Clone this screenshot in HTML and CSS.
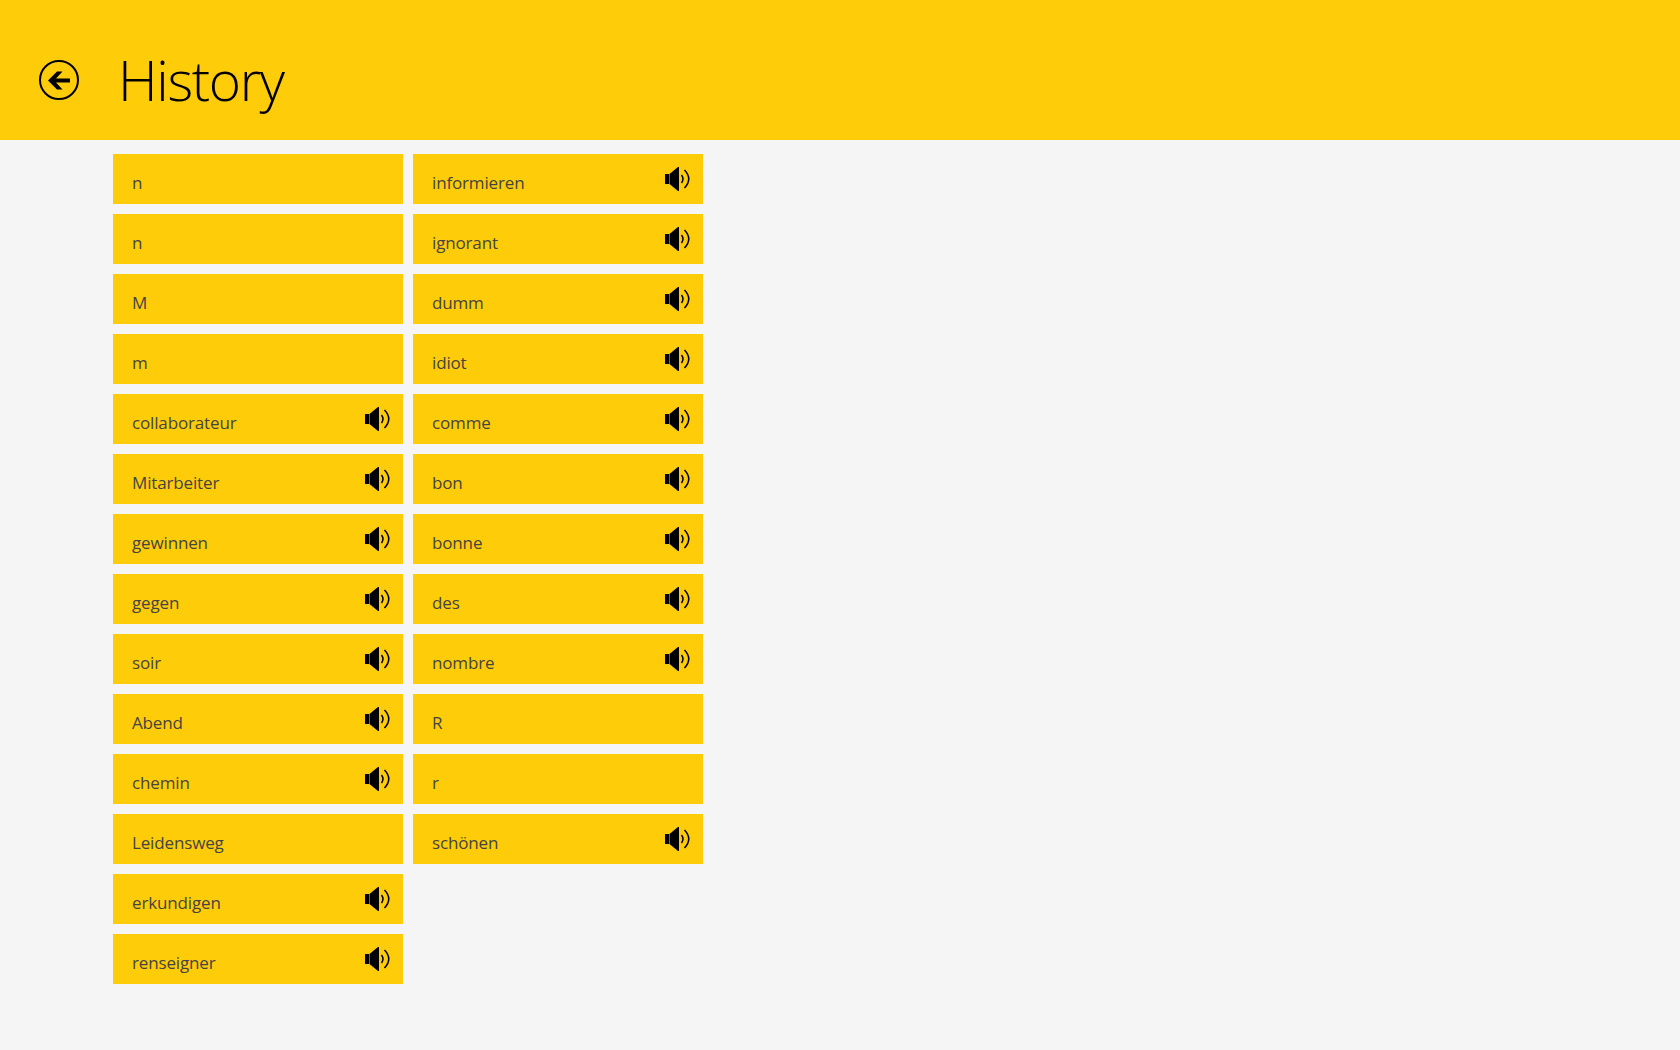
FILE: index.html
```html
<!DOCTYPE html>
<html>
<head>
    <title>History</title>
    <link rel="stylesheet" href="styles.css">
</head>
<body>
    <svg class="sprites" width="0" height="0">
        <symbol id="speaker" viewBox="0 0 25 24">
            <path d="M0 7h4v10H0z"/>
            <path d="M4.5 7 L13 0 h1 v24 h-1 L4.5 17z"/>
            <path class="wave" d="M16.5 8 Q19.5 12 16.5 16"/>
            <path class="wave" d="M19.5 3 Q28 12 19.5 21"/>
        </symbol>
    </svg>

    <div class="header">
        <a class="back-btn" href="#">
            <svg width="40" height="40" viewBox="0 0 40 40">
                <circle class="back-ring" cx="20" cy="20" r="19"/>
                <path d="M9 20.5 L18 11.5 h5.5 L17 18.5 H31 v4 H17 L23.5 29.5 H18z"/>
            </svg>
        </a>
        <h1>History</h1>
    </div>

    <div class="history-list">
        <div class="tile"><span>n</span></div>
        <div class="tile"><span>n</span></div>
        <div class="tile"><span>M</span></div>
        <div class="tile"><span>m</span></div>
        <div class="tile"><span>collaborateur</span><svg class="speaker"><use href="#speaker"/></svg></div>
        <div class="tile"><span>Mitarbeiter</span><svg class="speaker"><use href="#speaker"/></svg></div>
        <div class="tile"><span>gewinnen</span><svg class="speaker"><use href="#speaker"/></svg></div>
        <div class="tile"><span>gegen</span><svg class="speaker"><use href="#speaker"/></svg></div>
        <div class="tile"><span>soir</span><svg class="speaker"><use href="#speaker"/></svg></div>
        <div class="tile"><span>Abend</span><svg class="speaker"><use href="#speaker"/></svg></div>
        <div class="tile"><span>chemin</span><svg class="speaker"><use href="#speaker"/></svg></div>
        <div class="tile"><span>Leidensweg</span></div>
        <div class="tile"><span>erkundigen</span><svg class="speaker"><use href="#speaker"/></svg></div>
        <div class="tile"><span>renseigner</span><svg class="speaker"><use href="#speaker"/></svg></div>

        <div class="tile"><span>informieren</span><svg class="speaker"><use href="#speaker"/></svg></div>
        <div class="tile"><span>ignorant</span><svg class="speaker"><use href="#speaker"/></svg></div>
        <div class="tile"><span>dumm</span><svg class="speaker"><use href="#speaker"/></svg></div>
        <div class="tile"><span>idiot</span><svg class="speaker"><use href="#speaker"/></svg></div>
        <div class="tile"><span>comme</span><svg class="speaker"><use href="#speaker"/></svg></div>
        <div class="tile"><span>bon</span><svg class="speaker"><use href="#speaker"/></svg></div>
        <div class="tile"><span>bonne</span><svg class="speaker"><use href="#speaker"/></svg></div>
        <div class="tile"><span>des</span><svg class="speaker"><use href="#speaker"/></svg></div>
        <div class="tile"><span>nombre</span><svg class="speaker"><use href="#speaker"/></svg></div>
        <div class="tile"><span>R</span></div>
        <div class="tile"><span>r</span></div>
        <div class="tile"><span>schönen</span><svg class="speaker"><use href="#speaker"/></svg></div>
    </div>
</body>
</html>
```

FILE: styles.css
```css
body {
    font-family: 'Open Sans', 'Noto Sans', sans-serif;
    margin: 0;
    padding: 0;
    height: 1050px;
    overflow: hidden;
    background-color: #f5f5f5;
}

.sprites {
    display: block;
}

.header {
    background-color: #ffcc09;
    height: 140px;
    display: flex;
    align-items: center;
    padding: 20px 0 0 39px;
    box-sizing: border-box;
}

.back-btn {
    display: block;
    width: 40px;
    height: 40px;
    margin-right: 39px;
    color: #000;
    fill: #000;
}

.back-btn svg {
    display: block;
}

.back-ring {
    fill: none;
    stroke: #000;
    stroke-width: 2;
}

.header h1 {
    margin: 0;
    font-size: 55px;
    font-weight: 300;
    letter-spacing: -1.3px;
    line-height: 60px;
    color: #000;
}

.history-list {
    display: grid;
    grid-auto-flow: column;
    grid-template-rows: repeat(14, 50px);
    grid-template-columns: repeat(2, 290px);
    gap: 10px;
    margin: 14px 0 0 113px;
}

.tile {
    background-color: #ffcc09;
    display: flex;
    justify-content: space-between;
    padding: 0 13px 0 19px;
    color: #444;
    font-size: 17px;
    letter-spacing: -0.15px;
    line-height: 24px;
}

.tile span {
    padding-top: 17px;
}

.speaker {
    width: 25px;
    height: 24px;
    margin-top: 13px;
    fill: #000;
}

.wave {
    fill: none;
    stroke: #000;
    stroke-width: 1.5;
}
```
